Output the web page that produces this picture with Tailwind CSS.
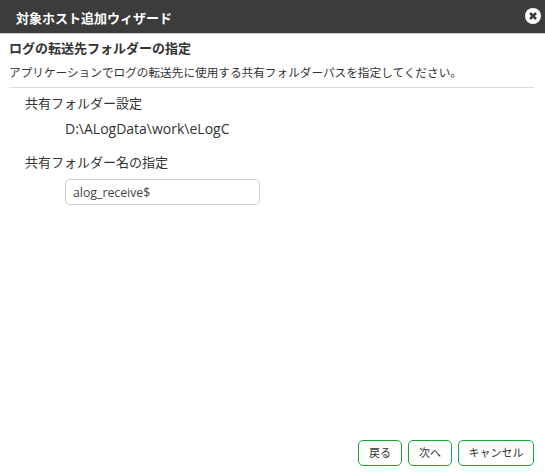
<!DOCTYPE html>
<html lang="ja">
<head>
    <meta charset="UTF-8">
    <title>対象ホスト追加ウィザード</title>
    <script src="https://cdn.jsdelivr.net/npm/@tailwindcss/browser@4"></script>
</head>
<body class="bg-white text-[#333333] font-['Open_Sans','Noto_Sans_CJK_JP',sans-serif]">
    <div class="w-[545px] h-[472px] flex flex-col overflow-hidden">
        <!-- タイトルバー -->
        <header class="h-[34px] shrink-0 bg-[#3c3c3c] border-b border-[#c8c8c8] flex items-center justify-between pl-4 pr-1">
            <h1 class="mt-[5px] text-[13px] font-bold text-white">対象ホスト追加ウィザード</h1>
            <button class="w-4 h-4 mb-[1px]">
                <svg viewBox="0 0 16 16" class="w-4 h-4">
                    <circle cx="8" cy="8" r="8" fill="#fff"/>
                    <path d="M5 5l6 6M11 5l-6 6" stroke="#3c3c3c" stroke-width="2.6"/>
                </svg>
            </button>
        </header>

        <main class="flex-1 flex flex-col px-[9px]">
            <h2 class="mt-[5px] text-[13px] leading-[18px] font-bold">ログの転送先フォルダーの指定</h2>
            <p class="mt-[7px] text-[11.65px] leading-[17px]">アプリケーションでログの転送先に使用する共有フォルダーパスを指定してください。</p>
            <hr class="mt-[6px] mr-[2px] border-[#dddddd]">

            <div class="pl-4 pt-[6px]">
                <h3 class="text-[13px] leading-[18px]">共有フォルダー設定</h3>
                <p class="mt-[8px] ml-10 text-[14px] leading-[18px]">D:\ALogData\work\eLogC</p>
                <h3 class="mt-[15px] text-[13px] leading-[18px]">共有フォルダー名の指定</h3>
                <input type="text" value="alog_receive$" class="block mt-[8px] ml-10 w-[195px] h-[26px] px-[7px] text-[12.3px] text-[#444444] border border-[#c9ccd4] rounded-[5px]">
            </div>

            <!-- ボタン -->
            <div class="mt-auto mb-[6px] mr-[2px] flex justify-end gap-[6px]">
                <button class="w-[44px] h-[26px] text-[11px] text-[#333333] border border-[#1aa33a] rounded-[5px]">戻る</button>
                <button class="w-[44px] h-[26px] text-[11px] text-[#333333] border border-[#1aa33a] rounded-[5px]">次へ</button>
                <button class="w-[76px] h-[26px] text-[11px] text-[#333333] border border-[#1aa33a] rounded-[5px]">キャンセル</button>
            </div>
        </main>
    </div>
</body>
</html>
